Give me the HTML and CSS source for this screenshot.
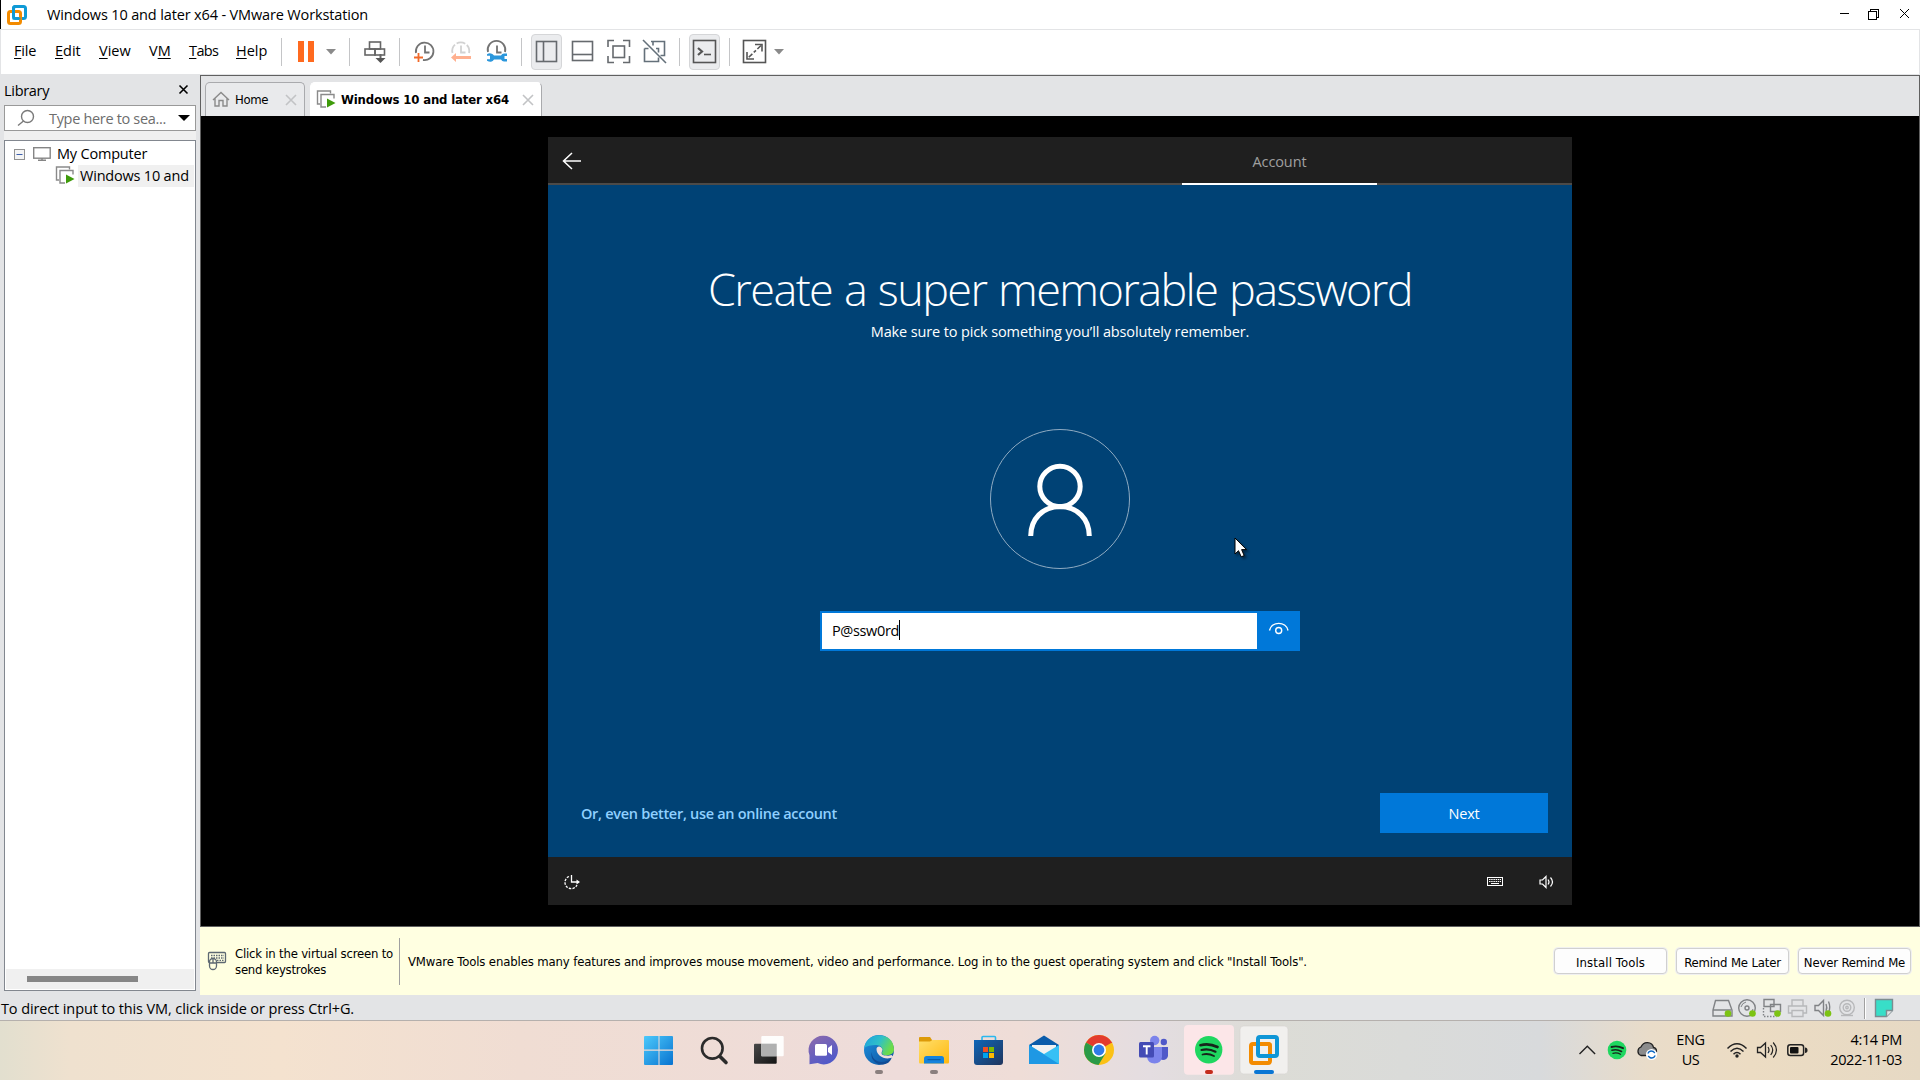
FILE: index.html
```html
<!DOCTYPE html>
<html lang="en">
<head>
<meta charset="utf-8">
<title>Windows 10 and later x64 - VMware Workstation</title>
<link rel="stylesheet" href="styles.css">
</head>
<body>
<div class="desktop">
  <header class="titlebar">
    <svg class="ico" width="34" height="29" viewBox="0 0 34 29"><g fill="none" stroke-width="3"><rect x="12.500" y="6.500" width="12" height="12" rx="2" stroke="#0f9ad6"/><rect x="7.500" y="11.500" width="12" height="12" rx="2" stroke="#f38b00"/><path d="M12.500 13v-4.500q0-2 2-2h8" stroke="#0f9ad6"/><path d="M12.500 14v4.500h7" stroke="#0f9ad6" stroke-width="2"/></g></svg>
    <span class="t t-title">Windows 10 and later x64 - VMware Workstation</span>
    <svg class="winctl" width="100" height="29" viewBox="1820 0 100 29" fill="none" stroke="#000" shape-rendering="crispEdges"><path d="M1840 13.500h9M1868.500 11.500h8v8h-8zM1870.500 11v-1.500h8v8h-1.500"/><path d="M1900 9l9 9M1909 9l-9 9" shape-rendering="auto"/></svg>
  </header>

  <nav class="menubar">
    <div class="menus">
      <span class="t m-file"><u>F</u>ile</span>
      <span class="t m-edit"><u>E</u>dit</span>
      <span class="t m-view"><u>V</u>iew</span>
      <span class="t m-vm">V<u>M</u></span>
      <span class="t m-tabs"><u>T</u>abs</span>
      <span class="t m-help"><u>H</u>elp</span>
    </div>
    <svg width="10" height="44" viewBox="277 30 10 44"><path d="M281.500 38v28" stroke="#c4c5c7"/></svg>
    <svg width="56" height="44" viewBox="287 30 56 44"><path d="M298 41h6v21h-6zM308 41h6v21h-6z" fill="#ff6a1f"/><path d="M326 49h10l-5 5.500z" fill="#8a8a8a"/></svg>
    <svg width="12" height="44" viewBox="343 30 12 44"><path d="M349.500 38v28" stroke="#c4c5c7"/></svg>
    <svg width="38" height="44" viewBox="355 30 38 44"><g fill="none" stroke="#666" stroke-width="1.600"><rect x="369.500" y="42" width="11" height="7"/><rect x="365" y="49" width="10" height="6"/><rect x="375" y="49" width="9.500" height="6"/><path d="M380.500 54v7" stroke-width="2"/></g><path d="M375.500 58h10l-5 5z" fill="#555"/></svg>
    <svg width="12" height="44" viewBox="393 30 12 44"><path d="M399.500 38v28" stroke="#c4c5c7"/></svg>
    <svg width="36" height="44" viewBox="405 30 36 44"><g fill="none" stroke="#737373" stroke-width="1.800"><path d="M416 53a8.800 8.800 0 1 1 7 7"/><path d="M425 45.500v7h4.500"/></g><path d="M414 57.500h9M418.500 53v9" stroke="#f26a2a" stroke-width="1.800"/></svg>
    <svg width="36" height="44" viewBox="441 30 36 44"><g fill="none" stroke="#d2d2d2" stroke-width="1.800"><path d="M452.500 53a8.500 8.500 0 1 1 16.500 0" stroke-dasharray="9 2"/><path d="M461 45.500v7h4.500"/></g><path d="M451 57.500l5-4.500v3h15v3h-15v3z" fill="#ffb08f"/></svg>
    <svg width="38" height="44" viewBox="477 30 38 44"><g fill="none" stroke="#737373" stroke-width="1.800"><path d="M488 52a8.800 8.800 0 1 1 17 0"/><path d="M497 45.500v7h4.500"/></g><path d="M487 54.200q2-1.200 4-.7 2 .5 3 2h7q1-2 3-2h3v2.500h-2.500v3h2.500v2.500h-3q-2 0-3-2h-7q-1 2-3 2.300-2 .2-4-1v-1.500h3v-3.500h-3z" fill="#2b97dc"/></svg>
    <svg width="12" height="44" viewBox="515 30 12 44"><path d="M521.500 38v28" stroke="#c4c5c7"/></svg>
    <svg width="40" height="44" viewBox="527 30 40 44"><rect x="531.500" y="34.500" width="30" height="35" rx="3.500" fill="#ebecee" stroke="#d5d6d8"/><g fill="none" stroke="#666a6e" stroke-width="1.600"><rect x="536.500" y="41.500" width="20" height="20"/><path d="M543.500 41v20"/></g></svg>
    <svg width="32" height="44" viewBox="567 30 32 44"><g fill="none" stroke="#666a6e" stroke-width="1.600"><rect x="572.500" y="41.500" width="20" height="19"/><path d="M572 54.500h21"/></g></svg>
    <svg width="38" height="44" viewBox="599 30 38 44"><g fill="none" stroke="#666a6e" stroke-width="1.600"><path d="M608 47v-6.500h6M623 40.500h6.500v6.500M629.500 56v6.500h-6.500M614 62.500h-6v-6.500"/><rect x="613" y="46" width="11.500" height="11.500"/></g></svg>
    <svg width="36" height="44" viewBox="637 30 36 44"><g fill="none" stroke="#64707a" stroke-width="1.600"><path d="M651 41.500h13.500v14h-4M644.500 48.500v13h14v-4M644.500 48.500h4M656 48.500h2.500v4M653 41.500v4"/><path d="M643 40l23 23"/></g></svg>
    <svg width="12" height="44" viewBox="673 30 12 44"><path d="M679.500 38v28" stroke="#c4c5c7"/></svg>
    <svg width="39" height="44" viewBox="685 30 39 44"><rect x="689.500" y="34.500" width="30" height="35" rx="3.500" fill="#ebecee" stroke="#d5d6d8"/><g fill="none" stroke="#555" stroke-width="1.600"><rect x="693.500" y="40.500" width="22" height="22"/><path d="M698 48l4 3.500-4 3.500" stroke-width="2.200"/><path d="M704 54.500h7"/></g></svg>
    <svg width="12" height="44" viewBox="724 30 12 44"><path d="M729.500 38v28" stroke="#c4c5c7"/></svg>
    <svg width="56" height="44" viewBox="736 30 56 44"><g fill="none" stroke="#555" stroke-width="1.600"><rect x="743.500" y="40.500" width="22" height="22"/><path d="M755 44.500h7v7M747 52v7h7"/><path d="M761 45.500l-13 12.500" stroke-dasharray="5 2 3 2"/></g><path d="M774 49h10l-5 5.500z" fill="#8a8a8a"/></svg>
  </nav>

  <main class="work">
    <aside class="library">
      <div class="lib-head"><span class="t t-lib">Library</span>
        <svg width="12" height="12" viewBox="0 0 12 12"><path d="M1.500 1.500l8 8M9.500 1.500l-8 8" stroke="#000" stroke-width="1.600"/></svg></div>
      <div class="search">
        <svg width="44" height="24" viewBox="5 106 44 24"><g fill="none" stroke="#7a7a7a" stroke-width="1.400"><circle cx="27.500" cy="116.500" r="6"/><path d="M23.500 121l-5.500 4.500"/></g></svg>
        <span class="t t-ph">Type here to sea...</span>
        <svg class="dd" width="12" height="8" viewBox="0 0 12 8"><path d="M0 1h12l-6 6z"/></svg>
      </div>
      <div class="strip"></div>
      <div class="tree">
        <div class="row">
          <svg width="52" height="22" viewBox="5 143 52 22"><rect x="14.500" y="149.500" width="10" height="10" fill="#f4f4f4" stroke="#919191"/><path d="M16.500 154.500h6" stroke="#3c5fae"/><g fill="none" stroke="#858585" stroke-width="1.400"><rect x="33.700" y="147.700" width="16.500" height="10.500"/><path d="M42 158v2.500M38 160.300h8"/></g></svg>
          <span class="t t-comp">My Computer</span>
        </div>
        <div class="row">
          <svg width="73" height="22" viewBox="5 165 73 22"><g fill="none" stroke="#8a8a8a" stroke-width="1.400"><path d="M59 180h-2.500v-13h13v2.500"/><path d="M65 183h-5v-12.500h13v4"/></g><path d="M66 174.500l8.500 4.500-8.500 4.500z" fill="#3f9b0b"/></svg>
          <span class="sel"><span class="t t-win">Windows 10 and</span></span>
        </div>
        <div class="hscroll"><div class="thumb"></div></div>
      </div>
    </aside>

    <section class="console">
      <div class="tabs">
        <div class="tab">
          <svg width="29" height="33" viewBox="206 83 29 33"><path d="M213 100l8-7.500 8 7.500M215 98.500v7.500h4v-5.500h4v5.500h4v-7.500" fill="none" stroke="#8a8a8a" stroke-width="1.400"/></svg>
          <span class="th t-home">Home</span>
          <svg class="x" width="12" height="12" viewBox="0 0 12 12"><path d="M1 1l10 10M11 1l-10 10" stroke="#c2c3c5" stroke-width="1.600"/></svg>
        </div>
        <div class="tab active">
          <svg width="30" height="33" viewBox="311 83 30 33"><g fill="none" stroke="#8a8a8a" stroke-width="1.400"><path d="M320 104h-2.500v-13h13v2.500"/><path d="M326 107h-5v-12.500h13v4"/></g><path d="M327 98.500l8.500 4.500-8.500 4.500z" fill="#3f9b0b"/></svg>
          <span class="th t-tab">Windows 10 and later x64</span>
          <svg class="x" width="12" height="12" viewBox="0 0 12 12"><path d="M1 1l10 10M11 1l-10 10" stroke="#c2c3c5" stroke-width="1.600"/></svg>
        </div>
      </div>

      <div class="stage">
        <div class="guest">
          <div class="g-top">
            <svg width="40" height="46" viewBox="548 137 40 46"><path d="M581 161h-17.500M572 153l-8.500 8 8.500 8" fill="none" stroke="#fff" stroke-width="1.500"/></svg>
            <div class="g-tab"><span class="t t-acc">Account</span></div>
          </div>
          <div class="g-body">
            <h1 class="t-h1">Create a super memorable password</h1>
            <p class="t t-sub">Make sure to pick something you’ll absolutely remember.</p>
            <svg class="avatar" width="140" height="140" viewBox="0 0 140 140" fill="none"><circle cx="70" cy="70" r="69.500" stroke="#8fabc2"/><g stroke="#fff" stroke-width="5"><circle cx="70" cy="57.500" r="20.200"/><path d="M40.700 107c0-17 12-29.500 29.300-29.500s29.300 12.500 29.300 29.500"/></g></svg>
            <div class="pw">
              <div class="pw-in"><span class="t t-pw">P@ssw0rd</span><i class="caret"></i></div>
              <svg width="41" height="36" viewBox="0 0 41 36" fill="none" stroke="#fff" stroke-width="1.400"><path d="M12.500 17.500c2-9.500 16.500-9.500 18.500 0"/><circle cx="21.700" cy="17.500" r="3"/></svg>
            </div>
            <div class="g-foot">
              <span class="t t-link">Or, even better, use an online account</span>
              <div class="next"><span class="t t-next">Next</span></div>
            </div>
          </div>
          <div class="g-bar">
            <svg width="48" height="48" viewBox="548 857 48 48"><g fill="none" stroke="#fff" stroke-width="1.300"><path d="M569 876.500a6.300 6.300 0 1 0 8 8.500" stroke-dasharray="2.500 1.200"/><path d="M571.500 875v7h6"/></g><path d="M576.500 879.500l3.500 2.500-3.500 2.500z" fill="#fff"/></svg>
            <div class="grow"></div>
            <svg width="92" height="48" viewBox="1480 857 92 48"><rect x="1487.500" y="877.500" width="15" height="8" fill="none" stroke="#fff"/><path d="M1489 879.500h12M1489 881.500h12" stroke="#fff" stroke-dasharray="1.500 .7"/><path d="M1491 883.500h8" stroke="#fff"/><g fill="none" stroke="#fff" stroke-width="1.200"><path d="M1540 880h2.500l3.500-3.500v11l-3.500-3.500h-2.500z"/><path d="M1548 879.500q2 2.500 0 5M1550.500 877.500q4 4.500 0 9"/></g></svg>
          </div>
          <svg class="cursor" width="18" height="24" viewBox="0 0 18 24"><path d="M1 1v16l3.500-3.300 2.700 6.100 3-1.200-2.600-6h4.900z" fill="#fff" stroke="#000"/></svg>
        </div>
      </div>

      <div class="notice">
        <svg width="35" height="68" viewBox="201 927 35 68"><g fill="none" stroke="#5d6872" stroke-width="1.300"><rect x="209.500" y="952.500" width="17" height="10" rx="1"/><path d="M212 955.500h13M212 958h13M218 960.300h7" stroke-dasharray="1.500 1"/><rect x="210.500" y="958.500" width="7" height="11" rx="3.500" fill="#ffffe1"/><path d="M214 959v4M210.500 963h7"/></g></svg>
        <div class="th n-click">Click in the virtual screen to<br>send keystrokes</div>
        <div class="n-sep"></div>
        <span class="th t-note">VMware Tools enables many features and improves mouse movement, video and performance. Log in to the guest operating system and click "Install Tools".</span>
        <div class="n-btns">
          <div class="btn"><span class="th b1">Install Tools</span></div>
          <div class="btn"><span class="th b2">Remind Me Later</span></div>
          <div class="btn"><span class="th b3">Never Remind Me</span></div>
        </div>
      </div>
    </section>
  </main>

  <footer class="status">
    <span class="t t-status">To direct input to this VM, click inside or press Ctrl+G.</span>
    <svg width="220" height="25" viewBox="1700 995 220 25">
      <g fill="none" stroke="#808285" stroke-width="1.400"><path d="M1715.500 1000.500h13l3.500 9.500v6h-19v-6zM1713 1010h18"/><circle cx="1747" cy="1008" r="8.300"/><circle cx="1747" cy="1008" r="2"/><path d="M1741 1007q1-4 5-5M1753 1009q-1 4-4 5" stroke-width="1"/><path d="M1764 999.500h10v7h-10zM1770.500 1004.500h10v7h-10z" fill="#e3e4e6"/><path d="M1763.500 1008v8.500h13" stroke-dasharray="1.500 1.500"/></g>
      <g fill="none" stroke="#b7b8ba" stroke-width="1.400"><path d="M1792 1006v-6h11v6M1792 1013h-3.500v-7h18v7h-3.500M1792 1010.500h11v6h-11z"/><circle cx="1847" cy="1007.500" r="7.300"/><circle cx="1847" cy="1007.500" r="3.800"/><circle cx="1847" cy="1007.500" r="1.200"/><path d="M1841 1015.500h12"/></g>
      <g fill="none" stroke="#808285" stroke-width="1.400"><path d="M1815 1005.500h3.500l5-5v15l-5-5h-3.500zM1826 1004q1.500 3.500 0 7M1828.500 1001.500q2.500 6 0 11"/></g>
      <g fill="#7cc312"><circle cx="1728" cy="1013.500" r="3.300"/><circle cx="1752.500" cy="1013.500" r="3.300"/><circle cx="1777.500" cy="1013.500" r="3.300"/><circle cx="1828" cy="1013.500" r="3.300"/></g>
      <path d="M1864.500 998v21" stroke="#a0a0a0"/><path d="M1865.500 998v21" stroke="#fff"/>
      <path d="M1875.500 999.500h17v11l-6 6h-11z" fill="#38dec8" stroke="#7d8c90" stroke-width="1.400"/><path d="M1886.500 1016.500v-6h6" fill="#e3e4e6" stroke="#7d8c90" stroke-width="1.400"/>
    </svg>
  </footer>

  <div class="taskbar">
    <svg width="0" height="0" class="defs"><defs>
      <linearGradient id="win" x1="0" y1="0" x2="1" y2="1"><stop offset="0" stop-color="#4cc9fb"/><stop offset="1" stop-color="#0873d0"/></linearGradient>
      <linearGradient id="chat" x1="0" y1="0" x2=".6" y2="1"><stop offset="0" stop-color="#8f6bab"/><stop offset="1" stop-color="#5059c9"/></linearGradient>
      <linearGradient id="edgeg" x1="0" y1="0" x2="1" y2=".4"><stop offset="0" stop-color="#1d9fe0"/><stop offset=".55" stop-color="#2fc0c8"/><stop offset="1" stop-color="#6ddc48"/></linearGradient>
      <linearGradient id="edgeb" x1="0" y1="0" x2="1" y2="1"><stop offset="0" stop-color="#1c93e0"/><stop offset="1" stop-color="#0f4f9c"/></linearGradient>
      <linearGradient id="fold" x1="0" y1="0" x2="1" y2="1"><stop offset="0" stop-color="#ffdf6b"/><stop offset="1" stop-color="#ffb80e"/></linearGradient>
      <linearGradient id="store" x1="0" y1="0" x2="1" y2="1"><stop offset="0" stop-color="#0f66b8"/><stop offset="1" stop-color="#20355c"/></linearGradient>
      <linearGradient id="dark" x1="0" y1="0" x2="1" y2="1"><stop offset="0" stop-color="#484848"/><stop offset="1" stop-color="#141414"/></linearGradient>
    </defs></svg>
    <svg class="app" viewBox="0 0 55 59"><path d="M14 15h13.500v13.500h-14.500v-12.500q0-1 1-1zM28.500 15h12.500q1 0 1 1v12.500h-13.500zM13 29.700h14.500v14.300h-13.500q-1 0-1-1zM28.500 29.700h13.500v13.300q0 1-1 1h-12.500z" fill="url(#win)"/></svg>
    <svg class="app" viewBox="0 0 55 59"><g fill="none" stroke="#2b2b2b"><circle cx="26.300" cy="27.300" r="10.300" stroke-width="2.600"/><path d="M34 35.500l6 6" stroke-width="3.600" stroke-linecap="round"/></g></svg>
    <svg class="app" viewBox="0 0 55 59"><rect x="13" y="22.700" width="22.700" height="20" rx="1" fill="url(#dark)"/><rect x="20.300" y="15" width="22.400" height="20.300" rx="1" fill="#fff" fill-opacity=".92"/><rect x="20.300" y="22.700" width="15.400" height="12.600" fill="#b0b0b0"/></svg>
    <svg class="app" viewBox="0 0 55 59"><path d="M27.700 14.800a14.300 14.300 0 1 1-6 27.300l-8.200 1.200v-9a14.300 14.300 0 0 1 14.200-19.500z" fill="url(#chat)"/><rect x="19" y="23" width="12" height="11.700" rx="1.500" fill="#fff"/><path d="M32 27l4-3v10l-4-3z" fill="#fff"/></svg>
    <svg class="app" viewBox="0 0 55 59"><circle cx="28" cy="29" r="15" fill="url(#edgeb)"/><path d="M13.200 27c2-17.500 29.800-17 29.800 1.500 0 7-12.500 7.500-12 3 2-3-.5-7.500-6-7.500-5 0-9.500 1-11.800 3z" fill="url(#edgeg)"/><path d="M21 31c-1 9 10 13.500 19.500 6.500-1.500 3.500-4.500 5.500-8 6-8 .5-14-6-11.500-12.500z" fill="#0f4c96"/><path d="M25.500 28c0-3 4.500-4 6 .5-.5 2.500-1.500 3-.5 5 2 1.500 7 1.500 9.500 .5l2 2c-8 4-17-1-17-8z" fill="#f0dedb"/><rect class="ind" x="24" y="49" width="8" height="4" rx="2"/></svg>
    <svg class="app" viewBox="0 0 55 59"><path d="M13 22v-5q0-1 1-1h10l2 3v3z" fill="#dd9a08"/><path d="M13 20.500h11l2.500-1.500h15.500q1 0 1 1v21q0 1.500-1 1.500h-28q-1 0-1-1.500z" fill="url(#fold)"/><path d="M18 42.500v-5q0-2.500 2.500-2.500h15q2.500 0 2.500 2.500v5z" fill="#1583dc"/><path d="M21.500 38.700h13" stroke="#0a549c"/><rect class="ind" x="24" y="49" width="8" height="4" rx="2"/></svg>
    <svg class="app" viewBox="0 0 55 59"><path d="M21 20v-3.500q0-1 1-1h11.500q1 0 1 1v3.500" fill="none" stroke="#2bb8ee" stroke-width="1.600"/><path d="M13 19h29v22q0 3-3 3h-23q-3 0-3-3z" fill="url(#store)"/><path d="M22 26h5v5h-5z" fill="#f25022"/><path d="M28 26h5v5h-5z" fill="#7fba00"/><path d="M22 32h5v5h-5z" fill="#00a4ef"/><path d="M28 32h5v5h-5z" fill="#ffb900"/></svg>
    <svg class="app" viewBox="0 0 55 59"><path d="M13 24l15-9.500 15 9.500v4h-30z" fill="#0a5cab"/><path d="M16 24h24v12h-24z" fill="#f1f1f1"/><path d="M13 24l15 9 15-9v19h-30z" fill="#36c0f5"/><path d="M13 24l30 19h-30z" fill="#1e98e4"/></svg>
    <svg class="app" viewBox="0 0 55 59"><circle cx="28" cy="29" r="15" fill="#fbc116"/><path d="M28 29l-13-7.500a15 15 0 0 1 26 0z" fill="#e33b2e"/><path d="M28 22h13.300l-.3-.5h-13z" fill="#e33b2e"/><path d="M15 21.500a15 15 0 0 0 12.500 22.500l7-11.500-6.500-3.500z" fill="#2a9a48"/><circle cx="28" cy="29" r="7" fill="#fff"/><circle cx="28" cy="29" r="5.400" fill="#2f7be8"/></svg>
    <svg class="app" viewBox="0 0 55 59"><circle cx="37.800" cy="21" r="3.200" fill="#5059c9"/><path d="M34 26h8v9q-1 4-5 4-3 0-3-3z" fill="#5059c9"/><circle cx="28.700" cy="19.500" r="4.700" fill="#7b83eb"/><path d="M21 26h15v10q-1 6.500-7.500 6.500t-7.500-6.500z" fill="#7b83eb"/><rect x="13" y="21" width="15" height="15.500" rx="1.500" fill="#444bb5"/><path d="M17 25.200h7.500M20.700 25v8.500" stroke="#fff" stroke-width="1.900"/></svg>
    <svg class="app" viewBox="0 0 55 59"><rect x="3" y="4" width="50" height="49.700" rx="4" fill="#fce6e8"/><circle cx="27.700" cy="28.700" r="13.700" fill="#1fd760"/><g fill="none" stroke="#17241b" stroke-linecap="round"><path d="M19.500 24.200q8.500-2.500 17 1.800" stroke-width="2.700"/><path d="M20.500 29q7-2 14 1.700" stroke-width="2.200"/><path d="M21.500 33.500q6-1.500 11.500 1.500" stroke-width="1.800"/></g><rect x="24" y="49" width="8" height="4" rx="2" fill="#c42b1c"/></svg>
    <svg class="app" viewBox="0 0 55 59"><rect x="4" y="5" width="48" height="48" rx="3.500" fill="#f1f0ee" stroke="#d8d6d2" stroke-width=".7"/><g fill="none" stroke-width="4"><rect x="15" y="23" width="19" height="19" rx="2" stroke="#f38b00"/><rect x="22" y="16" width="19" height="19" rx="2" stroke="#0f96d6"/><path d="M27 23h5q2 0 2 2v5" stroke="#f38b00"/></g><rect x="18" y="49" width="20" height="4" rx="2" fill="#0a76d4"/></svg>
    <div class="grow"></div>
    <svg width="95" height="59" viewBox="1570 1021 95 59"><path d="M1579.500 1054l7.800-7.800 7.800 7.800" fill="none" stroke="#222" stroke-width="1.400"/><circle cx="1617" cy="1050" r="9.300" fill="#1fd760"/><g fill="none" stroke="#17241b" stroke-linecap="round"><path d="M1611.500 1047q6-1.700 11.500 1.200" stroke-width="1.900"/><path d="M1612 1050.300q5-1.400 9.500 1.200" stroke-width="1.600"/><path d="M1613 1053.300q4-1 7.500 1" stroke-width="1.300"/></g><path d="M1641 1055.500a4.500 4.500 0 0 1 0-8.500q2-4.500 6.500-4.300 5 .3 6 4.800 3 .5 3 4l-5 4z" fill="#8c8c8c" stroke="#222" stroke-width="1.300"/><circle cx="1651.500" cy="1054.500" r="5.600" fill="#fff"/><path d="M1647.800 1053.500q1.500-3.500 5.500-2l1.500 1.500M1655.200 1055.500q-1.500 3.500-5.500 2l-1.500-1.500" fill="none" stroke="#0a66c2" stroke-width="1.400"/></svg>
    <div class="lang"><span class="t l1">ENG</span><br><span class="t l2">US</span></div>
    <svg width="97" height="59" viewBox="1716 1021 97 59"><g fill="none" stroke="#222" stroke-width="1.500"><path d="M1727.500 1048.500q9.500-9.500 19 0M1730.500 1051.500q6.500-6.500 13 0M1733.500 1054.200q3.500-3.500 7 0"/><path d="M1757.500 1047.500h3l5-4.500v14l-5-4.500h-3z" stroke-width="1.300"/><path d="M1768 1047q2 3 0 6M1770.700 1045q4 5 0 10M1773.200 1042.500q6.500 7.500 0 15" stroke-width="1.200"/><rect x="1787.800" y="1044.800" width="15.800" height="10.800" rx="2.500"/></g><circle cx="1737" cy="1056" r="1.700" fill="#222"/><rect x="1790" y="1047" width="8.500" height="6.500" rx="1" fill="#111"/><path d="M1805 1047.500q2.500 0 2.500 2.700t-2.500 2.700z" fill="#222"/></svg>
    <div class="clock"><span class="t c1">4:14 PM</span><br><span class="t c2">2022-11-03</span></div>
  </div>
</div>
</body>
</html>
```
FILE: styles.css
```css
* { box-sizing: border-box; }
body { margin: 0; background: #000; overflow: hidden; }
svg { display: block; flex: none; }
.desktop { width: 1920px; height: 1080px; display: flex; flex-direction: column; }
.t { font-family: "Open Sans", "Noto Sans", sans-serif; font-size: 14.5px; white-space: nowrap; color: #000; }
.th { font-family: "DejaVu Sans Condensed", "DejaVu Sans", sans-serif; font-stretch: condensed; font-size: 13px; white-space: nowrap; color: #000; }
.grow { flex: 1; }

.titlebar { height: 29px; background: #fff; display: flex; border-left: 1px solid #000; }
.titlebar .t { margin-left: 12px; line-height: 30px; }
.t-title { letter-spacing: -0.145px; }
.winctl { margin-left: auto; }

.menubar { height: 46px; background: #fff; display: flex; border: 1px solid #e3e4e6; }
.menus { width: 276px; padding-left: 13px; display: flex; line-height: 42px; }
.menus u { text-decoration: underline 1px; text-underline-offset: 2px; }
.m-file { width: 41px; letter-spacing: -0.2px; }
.m-edit { width: 44px; }
.m-view { width: 50px; }
.m-vm { width: 40px; }
.m-tabs { width: 47px; letter-spacing: -0.6px; }

.work { flex: 1; display: flex; background: #e3e4e6; min-height: 0; }
.library { width: 200px; padding-left: 4px; display: flex; flex-direction: column; padding-bottom: 4px; }
.lib-head { height: 30px; display: flex; align-items: center; padding-right: 10px; justify-content: space-between; }
.t-lib { letter-spacing: -0.3px; }
.search { width: 192px; height: 26px; border: 1px solid #999; background: #fff; display: flex; align-items: center; }
.t-ph { color: #6d6d6d; letter-spacing: -0.322px; }
.dd { margin-left: auto; margin-right: 5px; }
.strip { height: 9px; width: 192px; background: #f0f0f0; }
.tree { flex: 1; width: 192px; border: 1px solid #82878f; background: #fff; display: flex; flex-direction: column; padding: 2px 1px 1px 0; }
.row { display: flex; height: 22px; line-height: 22px; }
.t-comp, .t-win { letter-spacing: -0.2px; }
.sel { background: #f0f0f0; padding: 0 0 0 2px; width: 116px; }
.hscroll { margin-top: auto; margin-left: 1px; height: 20px; background: #f0f0f0; padding: 7px 0 0 21px; }
.thumb { width: 111px; height: 6px; background: #868686; }

.console { flex: 1; min-width: 0; display: flex; flex-direction: column; }
.tabs { height: 41px; border: solid #606060; border-width: 1px 1px 0 1px; padding: 6px 0 0 4px; display: flex; }
.tab { width: 100px; height: 34px; display: flex; align-items: center; border: 1px solid #a9aaad; border-bottom: 0; border-radius: 5px 5px 0 0; background: #e9eaec; margin-right: 5px; }
.tab.active { width: 232px; background: #fff; border-color: #fff #a9aaad #fff #fff; }
.t-home { letter-spacing: -0.387px; }
.t-tab { font-weight: bold; letter-spacing: -0.149px; }
.x { margin-left: auto; margin-right: 7px; }

.stage { height: 811px; background: #000; border: solid #606060; border-width: 0 1px 1px 1px; padding: 21px 0 0 347px; }
.guest { position: relative; width: 1024px; height: 768px; display: flex; flex-direction: column; }
.g-top { height: 48px; background: #1f1f1f; border-bottom: 2px solid #4c4a48; display: flex; }
.g-tab { width: 195px; height: 48px; margin-left: 594px; border-bottom: 2px solid #fff; text-align: center; line-height: 49px; }
.t-acc { color: #a0a0a0; letter-spacing: -0.1px; }
.g-body { height: 672px; background: #004275; display: flex; flex-direction: column; align-items: center; color: #fff; }
.g-body .t { color: #fff; }
.t-h1 { margin: 72px 0 0; font: 300 45px/64px "Open Sans", sans-serif; white-space: nowrap; letter-spacing: -1.6px; word-spacing: 1.6px; }
.t-sub { margin: 0; line-height: 22px; letter-spacing: -0.129px; }
.avatar { margin-top: 86px; }
.pw { margin-top: 42px; width: 480px; height: 40px; border: 2px solid #0078d9; background: #0078d9; display: flex; }
.pw-in { width: 435px; height: 36px; background: #fff; padding: 0 0 2px 10px; display: flex; align-items: center; }
.g-body .t-pw { color: #000; letter-spacing: -0.359px; }
.caret { width: 1px; height: 20px; background: #000; }
.g-foot { margin: 142px 0 0 9px; width: 967px; display: flex; justify-content: space-between; align-items: center; }
.g-body .t-link { color: #8fd0ff; font-weight: 600; letter-spacing: -0.292px; }
.next { width: 168px; height: 40px; background: #0078d9; text-align: center; line-height: 41px; }
.t-next { letter-spacing: -0.2px; }
.g-bar { height: 48px; background: #1f1f1f; display: flex; }
.cursor { position: absolute; left: 686px; top: 400px; filter: drop-shadow(2px 2px 1px rgba(0,0,0,.4)); }

.notice { height: 68px; background: #ffffe1; display: flex; align-items: center; }
.n-click { line-height: 16px; width: 164px; padding-top: 1px; letter-spacing: -0.21px; }
.n-sep { width: 1px; height: 47px; background: #a0a0a0; margin-right: 8px; }
.t-note { letter-spacing: -0.132px; }
.n-btns { display: flex; gap: 9px; margin-left: auto; margin-right: 9px; }
.btn { width: 113px; height: 26px; background: #fdfdfd; border: 1px solid #d0d0d0; box-shadow: 0 0 0 1px #f0f0f0; border-radius: 4px; text-align: center; line-height: 25px; }
.b1 { letter-spacing: 0.114px; }
.b2, .b3 { letter-spacing: -0.17px; }

.status { height: 26px; background: #e3e4e6; border-bottom: 1px solid #b5b0ad; display: flex; justify-content: space-between; line-height: 28px; }
.t-status { margin-left: 1px; letter-spacing: -0.113px; }

.taskbar { height: 59px; display: flex; padding-left: 631px; background: linear-gradient(90deg, #e2dfcf 0, #efe1cf 70px, #f4e2cf 280px, #f0ddd3 520px, #eedcda 900px, #efddd7 1020px, #e4dde1 1150px, #dcdcd6 1270px, #d8dadc 1540px, #e9dcc9 1650px, #ecdcc3 1750px, #e6d9c4 1920px); }
.defs { position: absolute; }
.app { width: 55px; height: 59px; }
.ind { fill: #8a7f7e; }
.lang { width: 51px; text-align: center; line-height: 20px; padding-top: 9px; letter-spacing: -0.4px; }
.clock { width: 107px; text-align: right; padding: 9px 18px 0 0; line-height: 20px; letter-spacing: -0.4px; }
```
